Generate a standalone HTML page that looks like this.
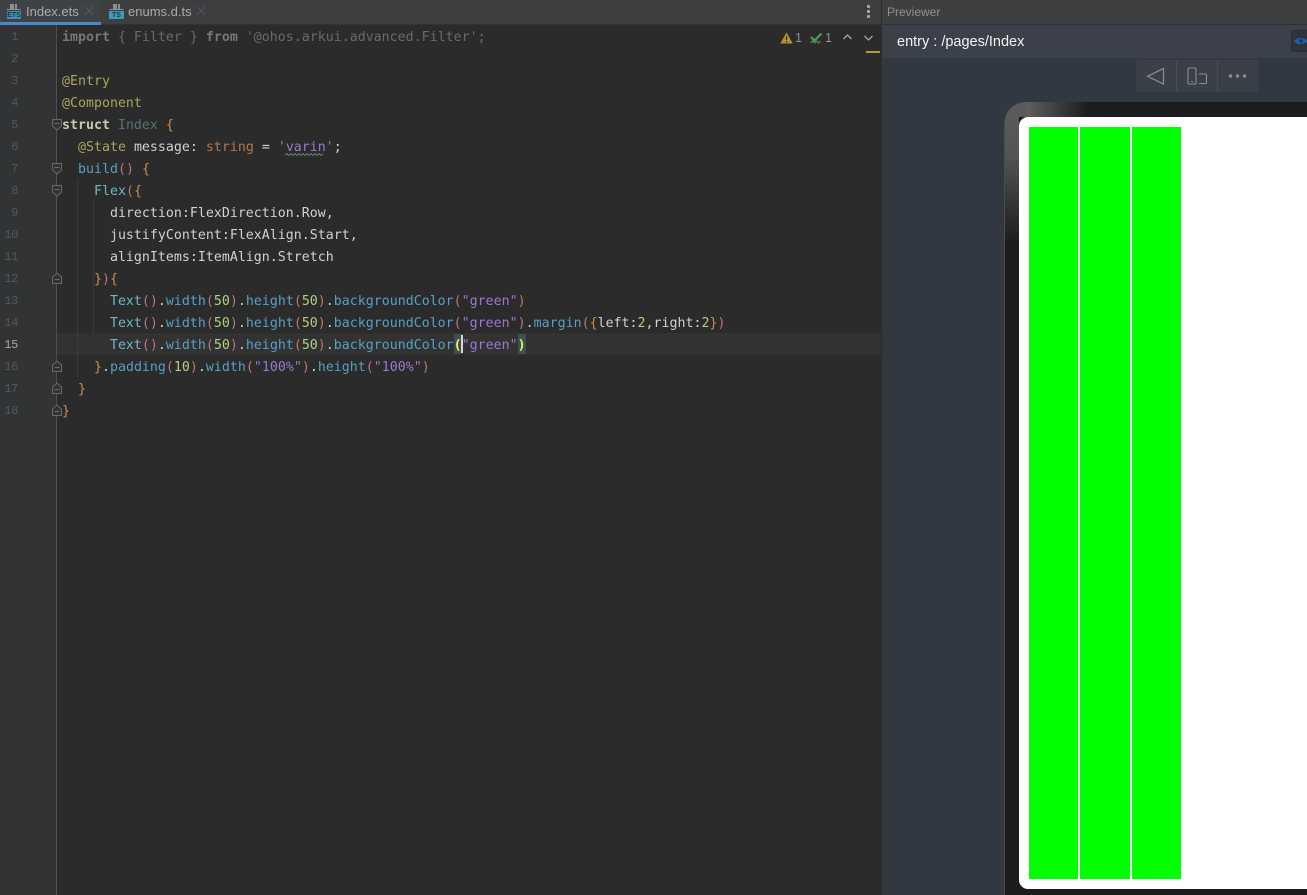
<!DOCTYPE html>
<html><head><meta charset="utf-8">
<style>
*{box-sizing:border-box}
html,body{margin:0;padding:0;width:1307px;height:895px;overflow:hidden;background:#2b2b2b}
#root{position:relative;width:1307px;height:895px;overflow:hidden}
#root *{position:absolute}
#root span{position:static}
#gutter{left:0;top:25px;width:57px;height:870px;background:#313335}
.ln{left:0;width:18px;text-align:right;font:12px/22px "Liberation Mono",monospace;color:#54585a;letter-spacing:-.3px;margin-top:1px}
.c{left:62px;height:22px;margin-top:2px;white-space:pre;font:13.28px/22px "DejaVu Sans Mono",monospace;letter-spacing:.005px;color:#bcbec4}
.w{color:#cfd1d4}.k{color:#c7c9b8;font-weight:bold}.dim{color:#676b6c}
.dk{color:#747879;font-weight:bold}.an{color:#aaa65a}.o{color:#cc8c4c}.t{color:#6fb6c9}.p{color:#b9747d}
.n{color:#b4cf7d}.s{color:#9a78d0}.m{color:#56a0c4}
.gr{color:#557477}
.fold{left:51px}
</style></head>
<body>
<div id="root">
<!-- tab bar -->
<div style="left:0;top:0;width:881px;height:25px;background:#3d3e3f;border-bottom:1px solid #323232"></div>
<div style="left:0;top:0;width:101px;height:25px;background:#3e4244"></div>
<div style="left:0;top:22px;width:101px;height:3px;background:#4a88c7"></div>
<svg style="left:6px;top:3px" width="16" height="17" viewBox="0 0 16 17"><path d="M4 1h4v5H4zM9 1h2v5H9z" fill="#8d9092"/><path d="M0.500 6h14v1h-14z" fill="#8d9092"/><rect x="1" y="8" width="14" height="8" fill="#3f8fb8"/></svg>
<div style="left:7px;top:12px;width:14px;height:8px;font:bold 7px/8px 'Liberation Sans',sans-serif;color:#26343d;text-align:center">ETS</div>
<div style="left:26px;top:3px;font:13px/18px 'Liberation Sans',sans-serif;color:#a9abad">Index.ets</div>
<svg style="left:84px;top:6px" width="10" height="10"><path d="M1 1l8 8M9 1l-8 8" stroke="#595d5f" stroke-width="1"/></svg>
<svg style="left:109px;top:3px" width="16" height="17" viewBox="0 0 16 17"><path d="M4 1h4v5H4zM9 1h2v5H9z" fill="#8d9092"/><path d="M0.500 6h14v1h-14z" fill="#8d9092"/><rect x="0" y="8" width="15" height="8" fill="#3f9ab8"/></svg>
<div style="left:109px;top:12px;width:15px;height:8px;font:bold 7px/8px 'Liberation Sans',sans-serif;color:#26343d;text-align:center">TS</div>
<div style="left:128px;top:3px;font:13px/18px 'Liberation Sans',sans-serif;color:#a9abad">enums.d.ts</div>
<svg style="left:196px;top:6px" width="10" height="10"><path d="M1 1l8 8M9 1l-8 8" stroke="#55595b" stroke-width="1"/></svg>
<svg style="left:866px;top:4px" width="5" height="15"><circle cx="2.500" cy="2.500" r="1.600" fill="#a8aaac"/><circle cx="2.500" cy="7.500" r="1.600" fill="#a8aaac"/><circle cx="2.500" cy="12.500" r="1.600" fill="#a8aaac"/></svg>

<!-- editor -->
<div id="gutter"></div>
<div style="left:0;top:333px;width:57px;height:22px;background:#323232"></div>
<div style="left:57px;top:333px;width:824px;height:22px;background:#323232"></div>
<div style="left:56px;top:25px;width:1px;height:870px;background:#4d4f51"></div>
<div style="left:77px;top:180px;width:1px;height:197px;background:#3a3a3a"></div>
<div style="left:93px;top:201px;width:1px;height:132px;background:#3a3a3a"></div>

<div class="ln" style="top:25px">1</div><div class="ln" style="top:47px">2</div><div class="ln" style="top:69px">3</div><div class="ln" style="top:91px">4</div><div class="ln" style="top:113px">5</div><div class="ln" style="top:135px">6</div><div class="ln" style="top:157px">7</div><div class="ln" style="top:179px">8</div><div class="ln" style="top:201px">9</div><div class="ln" style="top:223px">10</div><div class="ln" style="top:245px">11</div><div class="ln" style="top:267px">12</div><div class="ln" style="top:289px">13</div><div class="ln" style="top:311px">14</div><div class="ln" style="top:333px;color:#a4a8aa">15</div><div class="ln" style="top:355px">16</div><div class="ln" style="top:377px">17</div><div class="ln" style="top:399px">18</div>

<!-- fold icons -->
<svg class="fold" style="top:118px" width="12" height="13"><path d="M1.500 1.500h9v6.500l-4.500 4-4.500-4z" fill="#313335" stroke="#66696b"/><path d="M3.500 5.500h5" stroke="#66696b"/></svg>
<svg class="fold" style="top:162px" width="12" height="13"><path d="M1.500 1.500h9v6.500l-4.500 4-4.500-4z" fill="#313335" stroke="#66696b"/><path d="M3.500 5.500h5" stroke="#66696b"/></svg>
<svg class="fold" style="top:184px" width="12" height="13"><path d="M1.500 1.500h9v6.500l-4.500 4-4.500-4z" fill="#313335" stroke="#66696b"/><path d="M3.500 5.500h5" stroke="#66696b"/></svg>
<svg class="fold" style="top:272px" width="12" height="13"><path d="M1.500 11.500h9v-6.500l-4.500-4-4.500 4z" fill="#313335" stroke="#66696b"/><path d="M3.500 7.500h5" stroke="#66696b"/></svg>
<svg class="fold" style="top:360px" width="12" height="13"><path d="M1.500 11.500h9v-6.500l-4.500-4-4.500 4z" fill="#313335" stroke="#66696b"/><path d="M3.500 7.500h5" stroke="#66696b"/></svg>
<svg class="fold" style="top:382px" width="12" height="13"><path d="M1.500 11.500h9v-6.500l-4.500-4-4.500 4z" fill="#313335" stroke="#66696b"/><path d="M3.500 7.500h5" stroke="#66696b"/></svg>
<svg class="fold" style="top:404px" width="12" height="13"><path d="M1.500 11.500h9v-6.500l-4.500-4-4.500 4z" fill="#313335" stroke="#66696b"/><path d="M3.500 7.500h5" stroke="#66696b"/></svg>

<!-- bracket highlights -->
<div style="left:454px;top:334px;width:8px;height:20px;background:#3b514d"></div>
<div style="left:518px;top:334px;width:8px;height:20px;background:#3b514d"></div>

<!-- code -->
<div class="c" style="top:25px"><span class="dk">import</span><span class="dim"> { Filter } </span><span class="dk">from</span><span class="dim"> '@ohos.arkui.advanced.Filter';</span></div>
<div class="c an" style="top:69px">@Entry</div>
<div class="c an" style="top:91px">@Component</div>
<div class="c" style="top:113px"><span class="k">struct</span> <span class="gr">Index</span> <span class="o">{</span></div>
<div class="c" style="top:135px">  <span class="an">@State</span> <span class="w">message:</span> <span class="o" style="color:#b0784a">string</span> <span class="w">=</span> <span class="s">'varin'</span><span class="w">;</span></div>
<div class="c" style="top:157px">  <span class="m">build</span><span class="p">()</span> <span class="o">{</span></div>
<div class="c" style="top:179px">    <span class="t">Flex</span><span class="p">(</span><span class="o">{</span></div>
<div class="c w" style="top:201px">      direction:FlexDirection.Row,</div>
<div class="c w" style="top:223px">      justifyContent:FlexAlign.Start,</div>
<div class="c w" style="top:245px">      alignItems:ItemAlign.Stretch</div>
<div class="c" style="top:267px">    <span class="o">}</span><span class="p">)</span><span class="o">{</span></div>
<div class="c" style="top:289px">      <span class="t">Text</span><span class="p">()</span><span class="w">.</span><span class="m">width</span><span class="p">(</span><span class="n">50</span><span class="p">)</span><span class="w">.</span><span class="m">height</span><span class="p">(</span><span class="n">50</span><span class="p">)</span><span class="w">.</span><span class="m">backgroundColor</span><span class="p">(</span><span class="s">"green"</span><span class="p">)</span></div>
<div class="c" style="top:311px">      <span class="t">Text</span><span class="p">()</span><span class="w">.</span><span class="m">width</span><span class="p">(</span><span class="n">50</span><span class="p">)</span><span class="w">.</span><span class="m">height</span><span class="p">(</span><span class="n">50</span><span class="p">)</span><span class="w">.</span><span class="m">backgroundColor</span><span class="p">(</span><span class="s">"green"</span><span class="p">)</span><span class="w">.</span><span class="m">margin</span><span class="p">(</span><span class="o">{</span><span class="w">left:</span><span class="n">2</span><span class="w">,right:</span><span class="n">2</span><span class="o">}</span><span class="p">)</span></div>
<div class="c" style="top:333px">      <span class="t">Text</span><span class="p">()</span><span class="w">.</span><span class="m">width</span><span class="p">(</span><span class="n">50</span><span class="p">)</span><span class="w">.</span><span class="m">height</span><span class="p">(</span><span class="n">50</span><span class="p">)</span><span class="w">.</span><span class="m">backgroundColor</span><span style="color:#ecec6a;font-weight:bold">(</span><span class="s">"green"</span><span style="color:#ecec6a;font-weight:bold">)</span></div>
<div class="c" style="top:355px">    <span class="o">}</span><span class="w">.</span><span class="m">padding</span><span class="p">(</span><span class="n">10</span><span class="p">)</span><span class="w">.</span><span class="m">width</span><span class="p">(</span><span class="s">"100%"</span><span class="p">)</span><span class="w">.</span><span class="m">height</span><span class="p">(</span><span class="s">"100%"</span><span class="p">)</span></div>
<div class="c" style="top:377px">  <span class="o">}</span></div>
<div class="c" style="top:399px"><span class="o">}</span></div>
<div style="left:461px;top:335px;width:2px;height:18px;background:#d8d8d8"></div>
<svg style="left:285px;top:153px" width="42" height="4"><path d="M0 2l2-1.500 2 2 2-2 2 2 2-2 2 2 2-2 2 2 2-2 2 2 2-2 2 2 2-2 2 2 2-2 2 2 2-2 2 2 2-2" fill="none" stroke="#7f8c7a" stroke-width=".8"/></svg>

<!-- inspections -->
<svg style="left:780px;top:32px" width="13" height="12"><path d="M6.500 0.500L12.700 11.500H0.300z" fill="#b8912f"/><path d="M6.500 4v4M6.500 9v1.500" stroke="#2b2b2b" stroke-width="1.200"/></svg>
<div style="left:795px;top:30px;font:12.500px/16px 'Liberation Sans',sans-serif;color:#909294">1</div>
<svg style="left:810px;top:33px" width="13" height="13"><path d="M1 4l3.500 3.500L11.500 0.500" fill="none" stroke="#4f9a52" stroke-width="2.200"/><path d="M0.500 10l2-2 2 2 2-2 2 2 2-2" fill="none" stroke="#4f9a52"/></svg>
<div style="left:825px;top:30px;font:12.500px/16px 'Liberation Sans',sans-serif;color:#909294">1</div>
<svg style="left:842px;top:33px" width="11" height="8"><path d="M1.500 6L5.500 2l4 4" fill="none" stroke="#a0a2a4" stroke-width="1.300"/></svg>
<svg style="left:863px;top:34px" width="11" height="8"><path d="M1.500 2L5.500 6l4-4" fill="none" stroke="#a0a2a4" stroke-width="1.300"/></svg>
<div style="left:866px;top:51px;width:14px;height:2px;background:#b8982f"></div>

<!-- previewer -->
<div style="left:881px;top:0;width:426px;height:895px;background:#323841"></div>
<div style="left:881px;top:0;width:426px;height:25px;background:#3e3f41;border-bottom:1px solid #2f3133"></div>
<div style="left:881px;top:0;width:1px;height:895px;background:#2b2c2e"></div>
<div style="left:887px;top:3px;font:12px/18px 'Liberation Sans',sans-serif;color:#8f9193">Previewer</div>
<div style="left:882px;top:25px;width:425px;height:33px;background:#3b404a"></div>
<div style="left:897px;top:33px;font:14.500px/18px 'Liberation Sans',sans-serif;color:#f2f2f2">entry : /pages/Index</div>
<div style="left:1291px;top:30px;width:16px;height:22px;background:#2f343c;border:1px solid #282c33;border-right:0;border-radius:2px 0 0 2px"></div>
<svg style="left:1294px;top:34px" width="13" height="14"><path d="M0 7c3-4 9-4 14 0-5 4-11 4-14 0z" fill="#1a62b8"/><circle cx="7" cy="7" r="2" fill="#2f343c"/></svg>

<!-- toolbar -->
<div style="left:1136px;top:60px;width:122px;height:32px;background:#3a3f48;border-radius:2px"></div>
<div style="left:1176px;top:60px;width:1px;height:32px;background:#474c55"></div>
<div style="left:1217px;top:60px;width:1px;height:32px;background:#474c55"></div>
<svg style="left:1146px;top:67px" width="20" height="19"><path d="M17.500 1.500V17L1.500 9.300z" fill="none" stroke="#8a8e94" stroke-width="1.200"/></svg>
<svg style="left:1187px;top:67px" width="21" height="19"><rect x="1" y="1" width="8" height="16" rx="1" fill="none" stroke="#8a8e94" stroke-width="1.100"/><path d="M4 14.500h2" stroke="#8a8e94"/><path d="M12 7h6.500a1 1 0 0 1 1 1v7.500a1 1 0 0 1-1 1H12" fill="none" stroke="#8a8e94" stroke-width="1.100"/></svg>
<svg style="left:1228px;top:73px" width="20" height="6"><circle cx="2.500" cy="3" r="1.700" fill="#8a8e94"/><circle cx="9.500" cy="3" r="1.700" fill="#8a8e94"/><circle cx="16.500" cy="3" r="1.700" fill="#8a8e94"/></svg>

<!-- device -->
<div style="left:1004px;top:102px;width:340px;height:830px;border-radius:22px;background:#1c1c1c;overflow:hidden">
  <div style="left:0;top:0;width:84px;height:15px;background:linear-gradient(90deg,#565758 0,#5c5c5c 30%,#1c1c1c 100%)"></div>
  <div style="left:0;top:0;width:15px;height:140px;background:linear-gradient(180deg,#5c5c5c 0,#525354 40%,#1c1c1c 100%)"></div>
  <div style="left:0;top:0;width:1px;height:830px;background:#4a4e54"></div>
</div>
<div style="left:1019px;top:117px;width:320px;height:772px;border-radius:9px;background:#fff"></div>
<div style="left:1029px;top:127px;width:49px;height:752px;background:#0f0"></div>
<div style="left:1080px;top:127px;width:50px;height:752px;background:#0f0"></div>
<div style="left:1132px;top:127px;width:49px;height:752px;background:#0f0"></div>
</div>
</body></html>
